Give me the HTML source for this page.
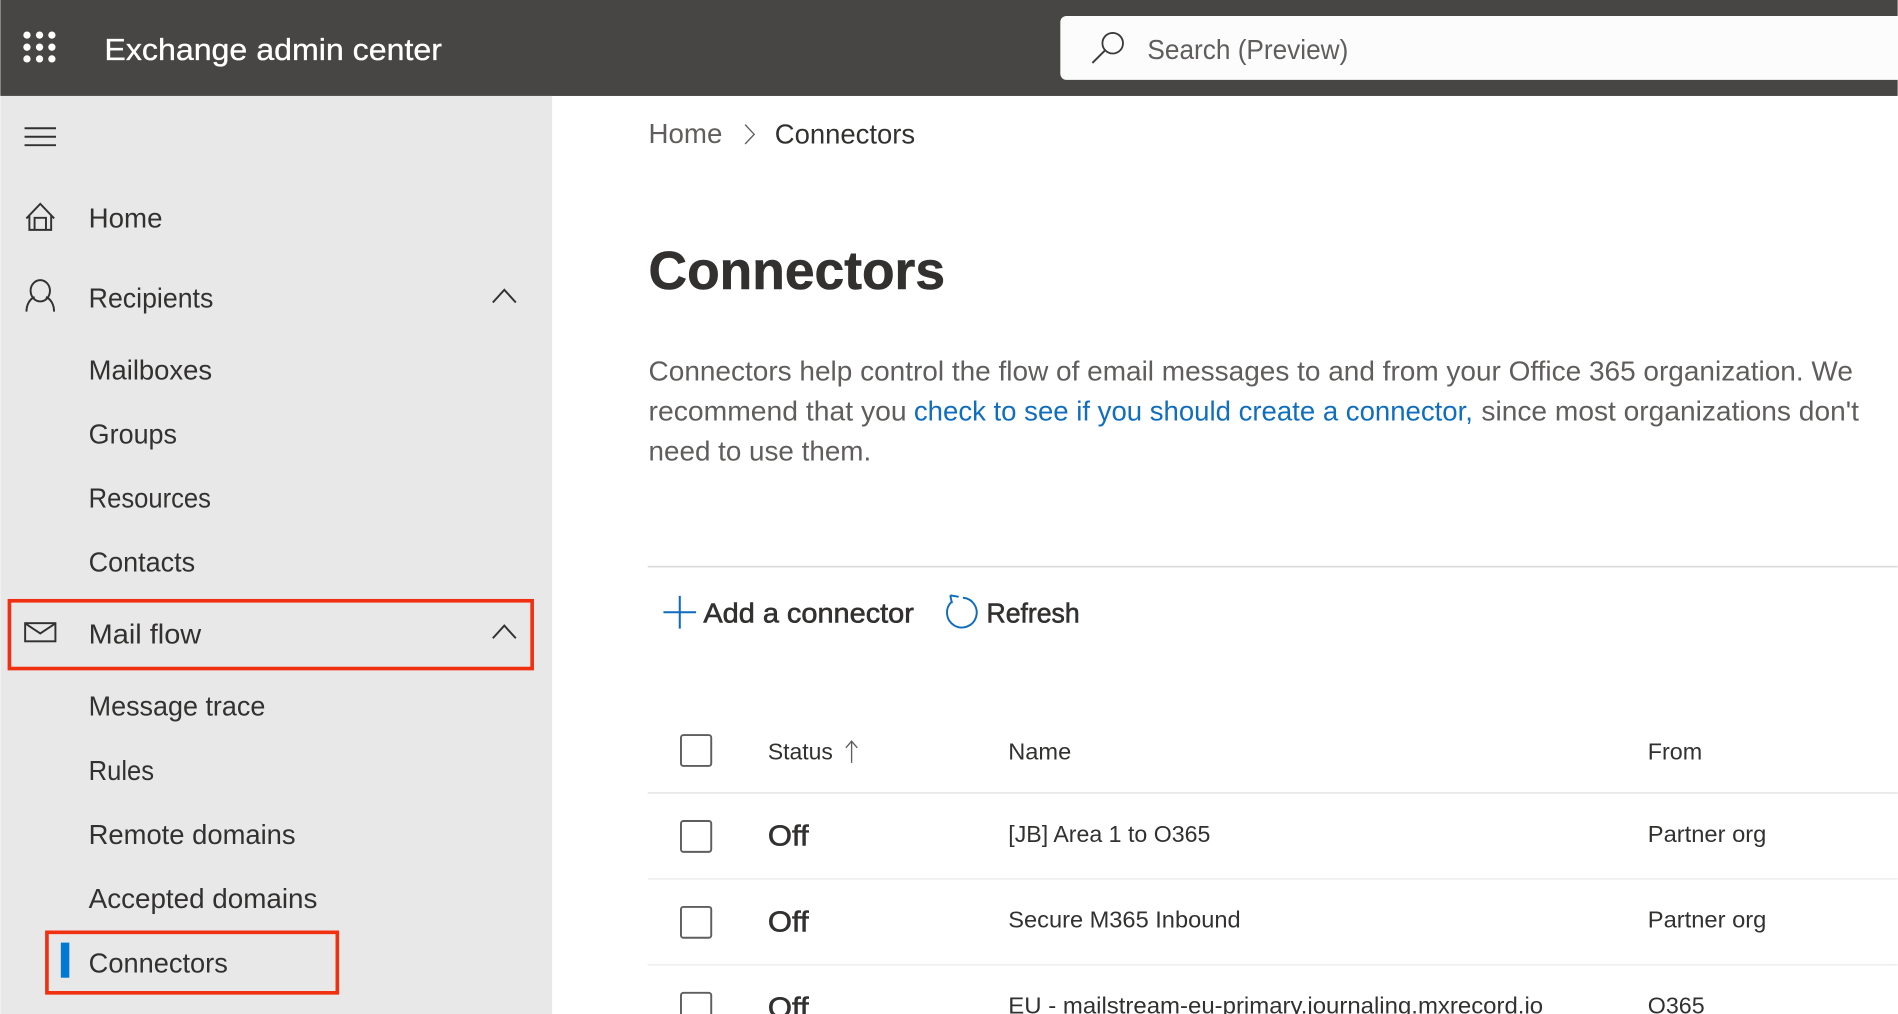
<!DOCTYPE html>
<html lang="en">
<head>
<meta charset="utf-8">
<title>Exchange admin center</title>
<style>
html,body{margin:0;padding:0;background:#fff;width:1898px;height:1014px;overflow:hidden}
svg{display:block}
text{font-family:"Liberation Sans",sans-serif;fill:#323130;white-space:pre}
.n{font-size:22.6px}
.p{font-size:22.6px;fill:#605e5c}
.t{font-size:19.4px}
.s{stroke:#323130;stroke-width:.5px}
.i{fill:none;stroke:#323130;stroke-width:1.6}
</style>
</head>
<body>
<svg xmlns="http://www.w3.org/2000/svg" width="1898" height="1014" viewBox="0 0 1568 838">
<rect width="1568" height="838" fill="#fff"/>
<!-- header -->
<rect width="1568" height="79.3" fill="#484644"/>
<g fill="#fff">
<circle cx="22" cy="29" r="3"/><circle cx="32.4" cy="29" r="3"/><circle cx="42.6" cy="29" r="3"/>
<circle cx="22" cy="39" r="3"/><circle cx="32.4" cy="39" r="3"/><circle cx="42.6" cy="39" r="3"/>
<circle cx="22" cy="48.7" r="3"/><circle cx="32.4" cy="48.7" r="3"/><circle cx="42.6" cy="48.7" r="3"/>
</g>
<text x="86" y="49.7" font-size="25.6" style="fill:#fff;stroke:#fff;stroke-width:.25px" textLength="279" lengthAdjust="spacingAndGlyphs">Exchange admin center</text>
<rect x="876" y="13.2" width="720" height="52.8" rx="5" fill="#fcfcfc"/>
<circle cx="919.3" cy="35.7" r="8.5" fill="none" stroke="#3b3a39" stroke-width="1.5"/>
<path d="M912.8 41.8L902.5 52" fill="none" stroke="#3b3a39" stroke-width="1.6"/>
<text x="948" y="48.8" class="n" style="fill:#605e5c" textLength="166" lengthAdjust="spacingAndGlyphs">Search (Preview)</text>
<!-- sidebar -->
<rect y="79.3" width="456" height="759" fill="#e8e8e8"/>
<path d="M20 106H46M20 113H46M20 120H46" class="i"/>
<path d="M21.5 180.5L33 168.5L44.5 180.5M24 178V190H42V178M28.3 190V180H37.7V190" class="i"/>
<ellipse cx="33" cy="240.3" rx="8" ry="8.8" class="i"/>
<path d="M21.6 257.5C21.6 251.5 24.5 247 28.3 245.5M44.4 257.5C44.4 251.5 41.5 247 37.7 245.5" class="i"/>
<path d="M407 250L416.5 239.5L426 250" class="i"/>
<rect x="20.5" y="515" width="25" height="15" class="i"/>
<path d="M21 515.5L33 523.5L45 515.5" class="i"/>
<path d="M407 527.5L416.5 517L426 527.5" class="i"/>
<text x="73" y="188" class="n" textLength="61" lengthAdjust="spacingAndGlyphs">Home</text>
<text x="73" y="254" class="n" textLength="103" lengthAdjust="spacingAndGlyphs">Recipients</text>
<text x="73" y="313.5" class="n" textLength="102" lengthAdjust="spacingAndGlyphs">Mailboxes</text>
<text x="73" y="366.5" class="n" textLength="73" lengthAdjust="spacingAndGlyphs">Groups</text>
<text x="73" y="419.5" class="n" textLength="101" lengthAdjust="spacingAndGlyphs">Resources</text>
<text x="73" y="472.5" class="n" textLength="88" lengthAdjust="spacingAndGlyphs">Contacts</text>
<text x="73" y="532" class="n" textLength="93" lengthAdjust="spacingAndGlyphs">Mail flow</text>
<text x="73" y="591.5" class="n" textLength="146" lengthAdjust="spacingAndGlyphs">Message trace</text>
<text x="73" y="644.5" class="n" textLength="54" lengthAdjust="spacingAndGlyphs">Rules</text>
<text x="73" y="697.5" class="n" textLength="171" lengthAdjust="spacingAndGlyphs">Remote domains</text>
<text x="73" y="750.5" class="n" textLength="189" lengthAdjust="spacingAndGlyphs">Accepted domains</text>
<text x="73" y="803.5" class="n" textLength="115" lengthAdjust="spacingAndGlyphs">Connectors</text>
<rect x="50" y="779" width="7" height="29" fill="#0078d4"/>
<rect x="7.5" y="496.5" width="432" height="56" fill="none" stroke="#f03010" stroke-width="3"/>
<rect x="38.5" y="770.5" width="240" height="50" fill="none" stroke="#f03010" stroke-width="3"/>
<!-- breadcrumb -->
<text x="535.7" y="118" class="n" style="fill:#605e5c" textLength="61" lengthAdjust="spacingAndGlyphs">Home</text>
<path d="M615.5 103L623 111L615.5 119" fill="none" stroke="#605e5c" stroke-width="1.1"/>
<text x="640" y="118.5" class="n" textLength="116" lengthAdjust="spacingAndGlyphs">Connectors</text>
<!-- title -->
<text x="535.7" y="238.7" font-size="44.5" font-weight="700" style="stroke:#323130;stroke-width:.5px" textLength="245" lengthAdjust="spacingAndGlyphs">Connectors</text>
<!-- paragraph -->
<text x="535.7" y="314.5" class="p" textLength="995.3" lengthAdjust="spacingAndGlyphs">Connectors help control the flow of email messages to and from your Office 365 organization. We</text>
<text x="535.7" y="347.5" class="p" textLength="213.3" lengthAdjust="spacingAndGlyphs">recommend that you</text>
<text x="755" y="347.5" class="p" style="fill:#106ebe" textLength="462" lengthAdjust="spacingAndGlyphs">check to see if you should create a connector,</text>
<text x="1224" y="347.5" class="p" textLength="312" lengthAdjust="spacingAndGlyphs">since most organizations don't</text>
<text x="535.7" y="380.5" class="p" textLength="184" lengthAdjust="spacingAndGlyphs">need to use them.</text>
<!-- toolbar -->
<rect x="535" y="467.6" width="1033" height="1.4" fill="#dcdbda"/>
<path d="M548 506H575M561.5 492.5V519.5" fill="none" stroke="#0f6cbd" stroke-width="1.7"/>
<text x="581" y="514.6" class="n s" textLength="174" lengthAdjust="spacingAndGlyphs">Add a connector</text>
<path d="M786 497.5A12.3 12.3 0 1 0 795.5 494M785 492L786.5 498.5M785 492L792 493.2" fill="none" stroke="#0f6cbd" stroke-width="1.6"/>
<text x="815" y="514.6" class="n s" textLength="77" lengthAdjust="spacingAndGlyphs">Refresh</text>
<!-- table -->
<rect x="562.5" y="607.5" width="25" height="25.5" rx="2" fill="#fff" stroke="#605e5c" stroke-width="1.6"/>
<text x="634.3" y="627.7" class="t" textLength="53.7" lengthAdjust="spacingAndGlyphs">Status</text>
<path d="M703.5 630.5V612.5M698.8 618L703.5 612.5L708.2 618" fill="none" stroke="#605e5c" stroke-width="1.1"/>
<text x="833" y="627.7" class="t" textLength="52" lengthAdjust="spacingAndGlyphs">Name</text>
<text x="1361.5" y="627.7" class="t" textLength="45" lengthAdjust="spacingAndGlyphs">From</text>
<rect x="535" y="654.6" width="1033" height="1.4" fill="#e9e8e7"/>
<rect x="535" y="725.6" width="1033" height="1.4" fill="#efeeed"/>
<rect x="535" y="796.6" width="1033" height="1.4" fill="#efeeed"/>

<rect x="562.5" y="678.5" width="25" height="25.5" rx="2" fill="#fff" stroke="#605e5c" stroke-width="1.6"/>
<text x="634.3" y="698.7" font-size="23.5" class="s" textLength="33.7" lengthAdjust="spacingAndGlyphs">Off</text>
<text x="833" y="695.7" class="t" textLength="167" lengthAdjust="spacingAndGlyphs">[JB] Area 1 to O365</text>
<text x="1361.5" y="695.7" class="t" textLength="98" lengthAdjust="spacingAndGlyphs">Partner org</text>

<rect x="562.5" y="749.5" width="25" height="25.5" rx="2" fill="#fff" stroke="#605e5c" stroke-width="1.6"/>
<text x="634.3" y="769.7" font-size="23.5" class="s" textLength="33.7" lengthAdjust="spacingAndGlyphs">Off</text>
<text x="833" y="766.7" class="t" textLength="192" lengthAdjust="spacingAndGlyphs">Secure M365 Inbound</text>
<text x="1361.5" y="766.7" class="t" textLength="98" lengthAdjust="spacingAndGlyphs">Partner org</text>

<rect x="562.5" y="820.5" width="25" height="25.5" rx="2" fill="#fff" stroke="#605e5c" stroke-width="1.6"/>
<text x="634.3" y="840.7" font-size="23.5" class="s" textLength="33.7" lengthAdjust="spacingAndGlyphs">Off</text>
<text x="833" y="837.7" class="t" textLength="442" lengthAdjust="spacingAndGlyphs">EU - mailstream-eu-primary.journaling.mxrecord.io</text>
<text x="1361.5" y="837.7" class="t" textLength="47" lengthAdjust="spacingAndGlyphs">O365</text>
</svg>
</body>
</html>
